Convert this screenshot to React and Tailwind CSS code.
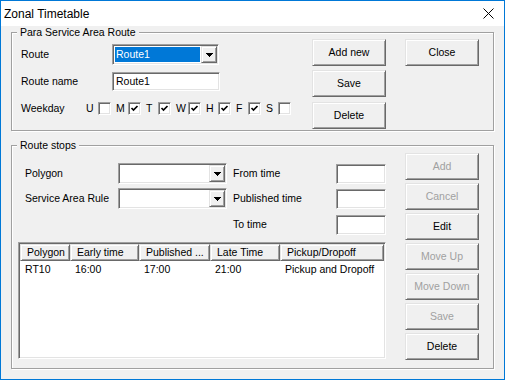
import React from 'react';

const sunken =
  'border border-t-[#a0a0a0] border-l-[#a0a0a0] border-b-white border-r-white shadow-[inset_1px_1px_0_#696969,inset_-1px_-1px_0_#e3e3e3]';
const raised =
  'border border-t-[#e3e3e3] border-l-[#e3e3e3] border-b-[#696969] border-r-[#696969] shadow-[inset_1px_1px_0_#fff,inset_-1px_-1px_0_#a0a0a0]';

const Btn = ({ children, disabled, className = '' }) => (
  <div
    className={`w-[74px] h-[27px] flex items-center justify-center bg-[#f0f0f0] ${raised} ${
      disabled ? 'text-[#a0a0a0]' : 'text-black'
    } ${className}`}
  >
    {children}
  </div>
);

const Arrow = () => (
  <svg width="7" height="4" viewBox="0 0 7 4">
    <path d="M0 0h7v1H0z M1 1h5v1H1z M2 2h3v1H2z M3 3h1v1H3z" fill="#000" />
  </svg>
);

const Combo = ({ value, width, selected }) => (
  <div className={`h-[21px] flex bg-white p-[1px] ${sunken}`} style={{ width }}>
    <div className="flex-1 flex p-[1px]">
      {selected ? (
        <div className="flex-1 bg-[#0078d7] text-white pl-[1px] flex items-center">{value}</div>
      ) : (
        <div className="flex-1 pl-[2px] flex items-center">{value}</div>
      )}
    </div>
    <div className={`w-[16px] flex items-center justify-center bg-[#f0f0f0] ${raised}`}>
      <Arrow />
    </div>
  </div>
);

const TextBox = ({ value, className = '' }) => (
  <div className={`bg-white pl-[3px] flex items-center ${sunken} ${className}`}>{value}</div>
);

const Check = ({ letter, checked }) => (
  <div className="w-[30px] flex items-center">
    <span className="w-[12px]">{letter}</span>
    <div className={`w-[13px] h-[13px] bg-white flex items-center justify-center ${sunken}`}>
      {checked && (
        <svg width="9" height="9" viewBox="0 0 9 9">
          <polyline points="1.5,4 3.5,6 7.5,2" fill="none" stroke="#000" strokeWidth="1.7" />
        </svg>
      )}
    </div>
  </div>
);

const GroupBox = ({ title, className = '', children }) => (
  <fieldset
    className={`border border-[#a0a0a0] shadow-[1px_1px_0_#fff,inset_1px_1px_0_#fff] m-0 p-0 ${className}`}
  >
    <legend className="ml-[5px] px-[3px] leading-[13px] bg-[#f0f0f0]">{title}</legend>
    {children}
  </fieldset>
);

const columns = [
  { label: 'Polygon', w: 'w-[50px]' },
  { label: 'Early time', w: 'w-[69px]' },
  { label: 'Published ...', w: 'w-[71px]' },
  { label: 'Late Time', w: 'w-[70px]' },
  { label: 'Pickup/Dropoff', w: 'w-[104px]' },
];

const rows = [['RT10', '16:00', '17:00', '21:00', 'Pickup and Dropoff']];

export default function App() {
  return (
    <div className="w-[505px] h-[380px] border border-[#0078d7] bg-[#f0f0f0] flex flex-col overflow-hidden text-[10.5px] text-black font-['Liberation_Sans',Arial,sans-serif]">
      {/* Title bar */}
      <div className="h-[25px] shrink-0 bg-white flex items-center justify-between pl-[3px] pr-[10px]">
        <span className="text-[12px]">Zonal Timetable</span>
        <svg width="11" height="11" viewBox="0 0 11 11">
          <path d="M0.5 0.5L10.5 10.5M10.5 0.5L0.5 10.5" stroke="#000" strokeWidth="1" />
        </svg>
      </div>

      <div className="flex-1 px-[10px]">
        {/* Route */}
        <GroupBox title="Para Service Area Route" className="pb-[1px]">
          <div className="flex">
            <div className="w-[300px] pl-[9px] flex flex-col">
              <div className="mt-[5px] h-[21px] flex items-center">
                <span className="w-[91px]">Route</span>
                <Combo value="Route1" width={107} selected />
              </div>
              <div className="mt-[7px] h-[19px] flex items-center">
                <span className="w-[91px]">Route name</span>
                <TextBox value="Route1" className="w-[108px] h-[19px]" />
              </div>
              <div className="mt-[11px] h-[13px] flex items-center">
                <span className="w-[65px]">Weekday</span>
                <Check letter="U" />
                <Check letter="M" checked />
                <Check letter="T" checked />
                <Check letter="W" checked />
                <Check letter="H" checked />
                <Check letter="F" checked />
                <Check letter="S" />
              </div>
            </div>
            <div className="flex flex-col">
              <Btn>Add new</Btn>
              <Btn className="mt-[4px]">Save</Btn>
              <Btn className="mt-[5px]">Delete</Btn>
            </div>
            <div className="ml-[19px]">
              <Btn>Close</Btn>
            </div>
          </div>
        </GroupBox>

        {/* Stops */}
        <GroupBox title="Route stops" className="mt-[8px] pb-[8px]">
          <div className="flex">
            <div className="w-[374px] pl-[6px] flex flex-col">
              <div className="mt-[11px] h-[21px] flex items-center">
                <span className="w-[100px] pl-[7px]">Polygon</span>
                <Combo value="" width={109} />
                <span className="w-[103px] ml-[6px]">From time</span>
                <TextBox className="w-[50px] h-[20px]" />
              </div>
              <div className="mt-[4px] h-[21px] flex items-center">
                <span className="w-[100px] pl-[7px]">Service Area Rule</span>
                <Combo value="" width={109} />
                <span className="w-[103px] ml-[6px]">Published time</span>
                <TextBox className="w-[50px] h-[20px]" />
              </div>
              <div className="mt-[5px] h-[21px] flex items-center">
                <span className="w-[209px]" />
                <span className="w-[103px] ml-[6px]">To time</span>
                <TextBox className="w-[50px] h-[20px]" />
              </div>

              {/* List */}
              <div className={`mt-[7px] h-[117px] w-[368px] bg-white p-[1px] ${sunken}`}>
                <div className="flex h-[17px]">
                  {columns.map((c) => (
                    <div
                      key={c.label}
                      className={`${c.w} pl-[6px] flex items-center bg-[#f0f0f0] whitespace-nowrap overflow-hidden ${raised}`}
                    >
                      {c.label}
                    </div>
                  ))}
                </div>
                {rows.map((r, i) => (
                  <div key={i} className="flex h-[17px] items-center">
                    {r.map((cell, j) => (
                      <span key={j} className={`${columns[j].w} pl-[5px] whitespace-nowrap`}>
                        {cell}
                      </span>
                    ))}
                  </div>
                ))}
              </div>
            </div>
            <div className="ml-[19px] mt-[1px] flex flex-col gap-[3px]">
              <Btn disabled>Add</Btn>
              <Btn disabled>Cancel</Btn>
              <Btn>Edit</Btn>
              <Btn disabled>Move Up</Btn>
              <Btn disabled>Move Down</Btn>
              <Btn disabled>Save</Btn>
              <Btn>Delete</Btn>
            </div>
          </div>
        </GroupBox>
      </div>
    </div>
  );
}
